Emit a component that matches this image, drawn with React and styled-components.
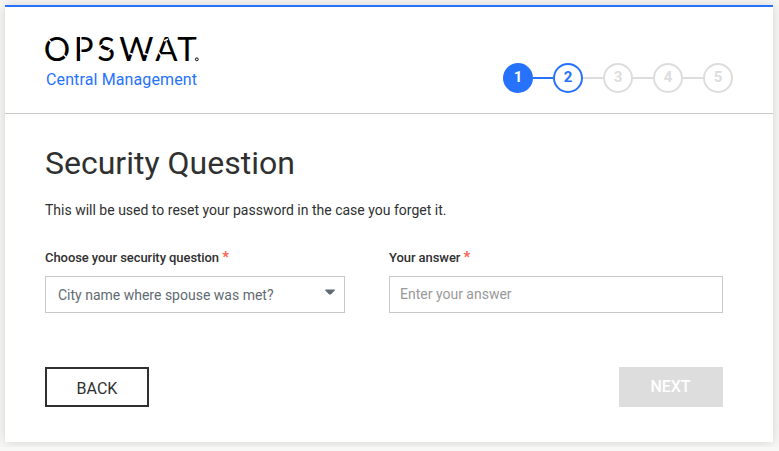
import React, { useState } from "react";
import styled, { createGlobalStyle } from "styled-components";

const steps = [1, 2, 3, 4, 5];

export default function App() {
  const [answer, setAnswer] = useState("");
  const current = 2;

  return (
    <>
      <GlobalStyle />
      <Card>
        <Header>
          <Logo />
          <Stepper>
            {steps.map((step) => (
              <Step key={step} $done={step < current} $active={step === current}>
                {step}
              </Step>
            ))}
          </Stepper>
        </Header>
        <Content>
          <Title>Security Question</Title>
          <Description>
            This will be used to reset your password in the case you forget it.
          </Description>
          <Fields>
            <Field $width="300px">
              <Label>
                Choose your security question <Required>*</Required>
              </Label>
              <Select type="button">
                City name where spouse was met?
                <Caret viewBox="0 0 10 6">
                  <path d="M0.3 0.4H9.7V1.6L6.3 5Q5 6.2 3.7 5L0.3 1.6Z" />
                </Caret>
              </Select>
            </Field>
            <Field $width="334px">
              <Label>
                Your answer <Required>*</Required>
              </Label>
              <Input
                placeholder="Enter your answer"
                value={answer}
                onChange={(e) => setAnswer(e.target.value)}
              />
            </Field>
          </Fields>
          <Actions>
            <Button>BACK</Button>
            <Button disabled>NEXT</Button>
          </Actions>
        </Content>
      </Card>
    </>
  );
}

function Logo() {
  return (
    <LogoSvg viewBox="0 0 156 60">
      <text className="brand" x="-1.2 28.7 52.2 74.2 110.2 132.3" y="29">
        OPSWAT
      </text>
      {/* stencil cuts */}
      <g stroke="#fff" strokeWidth="1.4">
        <path d="M1 5L7 11M18 22L23 27M35.8 4V22M54 15L58 12M63 19L67 16M84 21L89 23M98 21L103 23M119 9L123 7M113.5 20L116.5 24M147 8.4H153" />
      </g>
      <circle cx="151.8" cy="27.3" r="1.4" fill="none" stroke="#000" />
      <text className="product" x="1" y="53" textLength="151">
        Central Management
      </text>
    </LogoSvg>
  );
}

const GlobalStyle = createGlobalStyle`
  * {
    box-sizing: border-box;
  }
  body {
    margin: 0;
    background: #f8f8f7;
    color: #303030;
    font-family: Roboto, sans-serif;
    overflow: hidden;
  }
  button, input {
    font-family: inherit;
  }
`;

const Card = styled.main`
  width: 768px;
  height: 437px;
  margin: 5px;
  background: #fff;
  border-top: 2px solid #2672fb;
  box-shadow: 0 0 12px rgba(0, 0, 0, 0.16);
`;

const Header = styled.header`
  display: flex;
  justify-content: space-between;
  height: 107px;
  padding: 25px 40px 0;
  border-bottom: 1px solid #c8c8c8;
`;

const LogoSvg = styled.svg`
  width: 156px;
  height: 60px;
  overflow: visible;
  .brand {
    font-family: Lato, sans-serif;
    font-size: 33px;
  }
  .product {
    fill: #2672fb;
    font-family: Roboto, sans-serif;
    font-size: 16px;
  }
`;

const Stepper = styled.div`
  display: flex;
  padding-top: 31px;
`;

const Step = styled.div`
  display: flex;
  align-items: center;
  justify-content: center;
  position: relative;
  width: 30px;
  height: 30px;
  padding-bottom: 2px;
  border: 2px solid ${(p) => (p.$done || p.$active ? "#2672fb" : "#ddd")};
  border-radius: 50%;
  background: ${(p) => (p.$done ? "#2672fb" : "#fff")};
  color: ${(p) => (p.$done ? "#fff" : p.$active ? "#2672fb" : "#ddd")};
  font-size: 15px;
  font-weight: 700;
  & + & {
    margin-left: 20px;
  }
  &:not(:last-child)::after {
    content: "";
    position: absolute;
    top: 12px;
    left: 28px;
    width: 20px;
    height: 2px;
    background: ${(p) => (p.$done ? "#2672fb" : "#ddd")};
  }
`;

const Content = styled.section`
  padding: 30px 50px 0 40px;
`;

const Title = styled.h1`
  margin: 0;
  font-size: 32px;
  font-weight: 400;
  line-height: 38px;
`;

const Description = styled.p`
  margin: 18px 0 0;
  font-size: 14px;
  line-height: 20px;
`;

const Fields = styled.div`
  display: flex;
  justify-content: space-between;
  margin-top: 28px;
`;

const Field = styled.div`
  display: flex;
  flex-direction: column;
  width: ${(p) => p.$width};
`;

const Label = styled.label`
  height: 28px;
  font-size: 13px;
  font-weight: 500;
  line-height: 20px;
  letter-spacing: -0.07px;
`;

const Required = styled.span`
  color: #fa6450;
  font-size: 15px;
  font-weight: 700;
  line-height: 1;
`;

const Select = styled.button`
  display: flex;
  align-items: center;
  justify-content: space-between;
  height: 37px;
  padding: 0 9px 0 12px;
  border: 1px solid #c8c8c8;
  background: #fff;
  color: #5f6b72;
  font-size: 14px;
`;

const Caret = styled.svg`
  width: 10px;
  height: 6px;
  margin-bottom: 6px;
  fill: #5f6b72;
`;

const Input = styled.input`
  height: 37px;
  padding: 0 10px 1px;
  border: 1px solid #c8c8c8;
  border-radius: 0;
  outline: none;
  font-size: 14px;
  &::placeholder {
    color: #999;
  }
`;

const Actions = styled.div`
  display: flex;
  justify-content: space-between;
  margin-top: 54px;
`;

const Button = styled.button`
  width: 104px;
  height: 40px;
  padding: 2px 0 0;
  border: 2px solid #303030;
  background: #fff;
  color: #303030;
  font-size: 16px;
  &:disabled {
    padding: 0 1px 2px 0;
    border-color: #ddd;
    background: #ddd;
    color: #fff;
    font-weight: 500;
  }
`;
